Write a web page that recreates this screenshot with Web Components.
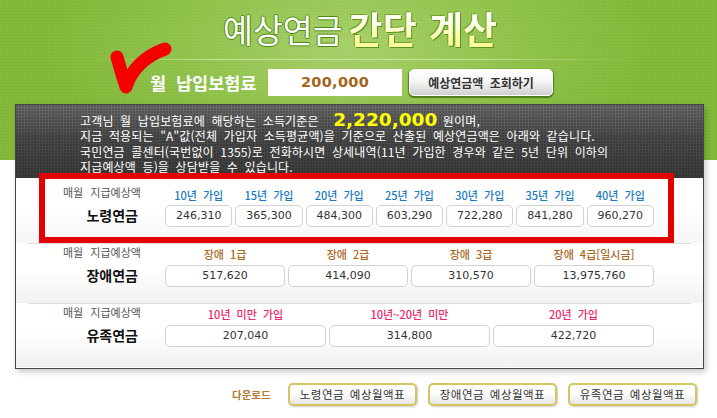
<!DOCTYPE html>
<html lang="ko">
<head>
<meta charset="utf-8">
<title>예상연금 간단 계산</title>
<style>
html, body { margin: 0; padding: 0; background: #fff; }
body { font-family: "Noto Sans CJK KR", "Liberation Sans", sans-serif; width: 717px; height: 418px; overflow: hidden; }
</style>
</head>
<body>
<pension-calculator>
  <pension-title slot="title"></pension-title>
  <premium-form slot="form" amount="200,000"></premium-form>
  <income-notice slot="notice" income="2,220,000"></income-notice>

  <pension-row slot="rows" name="노령연금" kind="old" highlight>
    <pension-cell label="10년 가입" value="246,310"></pension-cell>
    <pension-cell label="15년 가입" value="365,300"></pension-cell>
    <pension-cell label="20년 가입" value="484,300"></pension-cell>
    <pension-cell label="25년 가입" value="603,290"></pension-cell>
    <pension-cell label="30년 가입" value="722,280"></pension-cell>
    <pension-cell label="35년 가입" value="841,280"></pension-cell>
    <pension-cell label="40년 가입" value="960,270"></pension-cell>
  </pension-row>
  <pension-row slot="rows" name="장애연금" kind="disabled">
    <pension-cell label="장애 1급" value="517,620"></pension-cell>
    <pension-cell label="장애 2급" value="414,090"></pension-cell>
    <pension-cell label="장애 3급" value="310,570"></pension-cell>
    <pension-cell label="장애 4급[일시금]" value="13,975,760"></pension-cell>
  </pension-row>
  <pension-row slot="rows" name="유족연금" kind="survivor">
    <pension-cell label="10년 미만 가입" value="207,040"></pension-cell>
    <pension-cell label="10년~20년 미만" value="314,800"></pension-cell>
    <pension-cell label="20년 가입" value="422,720"></pension-cell>
  </pension-row>

  <download-bar slot="downloads">
    <download-button>노령연금 예상월액표</download-button>
    <download-button>장애연금 예상월액표</download-button>
    <download-button>유족연금 예상월액표</download-button>
  </download-bar>
</pension-calculator>

<script>
const FONT = `"Noto Sans CJK KR", "Liberation Sans", sans-serif`
const DOTS = `radial-gradient(circle at 1px 1px, rgba(255,255,255,0.05) 1px, transparent 1.2px)`

class PensionCalculator extends HTMLElement {
    constructor() {
        super()
        this.attachShadow({ mode: "open" })
        this.shadowRoot.innerHTML = `
        <style>
        :host { display: block; position: relative; width: 717px; height: 418px; background: #fff; }
        .top {
            height: 160px;
            background-image: ${DOTS}, radial-gradient(ellipse 300px 130px at 350px 45px, #a6cf68 0%, #8fc149 55%, #7fb735 100%);
            background-size: 3px 3px, auto;
        }
        .panel {
            margin: -56px 0 0 15px;
            position: relative;
            width: 687px;
            height: 263px;
            border: 1px solid #444;
            background: #fff;
            box-shadow: 2px 3px 6px rgba(0,0,0,0.22);
        }
        .check { position: absolute; left: 100px; top: 35px; width: 80px; height: 65px; filter: blur(0.4px); }
        .mark {
            position: absolute; left: 23px; top: 68px;
            width: 623px; height: 58px;
            border: 6px solid #e20000;
            pointer-events: none;
        }
        .foot { margin-top: 14px; }
        </style>
        <div class="top">
            <slot name="title"></slot>
            <slot name="form"></slot>
        </div>
        <div class="panel">
            <slot name="notice"></slot>
            <slot name="rows"></slot>
            <div class="mark"></div>
        </div>
        <div class="foot"><slot name="downloads"></slot></div>
        <svg class="check" viewBox="100 35 80 65">
            <path d="M117 57 C120 68 123 78 126 87 C131 70 145 56 165 49" fill="none" stroke="#f40000" stroke-width="13" stroke-linecap="round" stroke-linejoin="round"/>
        </svg>`
    }
}

class PensionTitle extends HTMLElement {
    constructor() {
        super()
        this.attachShadow({ mode: "open" })
        this.shadowRoot.innerHTML = `
        <style>
        :host {
            display: block; height: 60px; box-sizing: border-box;
            padding-left: 223px;
            font-family: ${FONT};
            border-bottom: 1px solid;
            border-image: linear-gradient(90deg, transparent 13%, #c6e09a 30%, #c6e09a 65%, transparent 88%) 1;
        }
        .row { display: flex; align-items: center; gap: 6px; height: 59px; }
        .soft {
            font-size: 32.5px; font-weight: 400; color: #fff; line-height: 1; margin-top: -1px;
            text-shadow: 1px 0 0 #4d8a12, -1px 0 0 #4d8a12, 0 1px 0 #4d8a12, 0 -1px 0 #4d8a12;
        }
        .bold {
            font-size: 37px; font-weight: 700; line-height: 1; word-spacing: 2px; margin-top: -3px;
            background: linear-gradient(180deg, #fffff4 30%, #fff9a0 80%);
            -webkit-background-clip: text; background-clip: text; color: transparent;
            filter: drop-shadow(1px 1px 0 #5b9419) drop-shadow(-1px -1px 0 #6fa62a);
        }
        </style>
        <div class="row"><span class="soft">예상연금</span><span class="bold">간단 계산</span></div>`
    }
}

class PremiumForm extends HTMLElement {
    constructor() {
        super()
        this.attachShadow({ mode: "open" })
        this.shadowRoot.innerHTML = `
        <style>
        :host { display: flex; align-items: center; height: 27px; margin-top: 9px; padding-left: 150px; font-family: ${FONT}; }
        .label { width: 118px; color: #fff; font-size: 17.5px; font-weight: 700; word-spacing: 5px; line-height: 27px; white-space: nowrap; }
        .amount {
            width: 134px; height: 27px; margin-right: 7px; background: #fff;
            color: #a5641b; font: 700 14.5px/27px "DejaVu Sans", sans-serif; text-align: center; letter-spacing: 0.3px;
        }
        .go {
            width: 144px; height: 27px; box-sizing: border-box;
            border: 1px solid #fff; border-radius: 5px;
            background: linear-gradient(180deg, #fff 0%, #f6f6f6 45%, #cfcfcf 100%);
            box-shadow: 0 1px 1px 1px #4f7d1b;
            color: #333; font: 700 12px/25px ${FONT}; text-align: center; word-spacing: 3px;
        }
        </style>
        <div class="label">월 납입보험료</div>
        <div class="amount"></div>
        <div class="go">예상연금액 조회하기</div>`
        this.shadowRoot.querySelector(".amount").textContent = this.getAttribute("amount")
    }
}

class IncomeNotice extends HTMLElement {
    constructor() {
        super()
        this.attachShadow({ mode: "open" })
        this.shadowRoot.innerHTML = `
        <style>
        :host {
            display: block; height: 73px; box-sizing: border-box; padding: 8px 0 0 64px;
            background-image: radial-gradient(circle at 1px 1px, rgba(0,0,0,0.18) 1px, transparent 1.2px), linear-gradient(180deg, #6a6a6a 0%, #4a4a4a 45%, #3c3c3c 100%);
            background-size: 3px 3px, auto;
            color: #fff; font: 400 12px/15px ${FONT}; white-space: nowrap; word-spacing: 3px; letter-spacing: 0.15px;
        }
        div { height: 15.3px; }
        b { color: #ffff00; font: 700 18.5px/0 "DejaVu Sans", sans-serif; margin: 0 -1px 0 8px; letter-spacing: 0; word-spacing: 0; }
        </style>
        <div>고객님 월 납입보험료에 해당하는 소득기준은 <b></b> 원이며,</div>
        <div>지금 적용되는 "A"값(전체 가입자 소득평균액)을 기준으로 산출된 예상연금액은 아래와 같습니다.</div>
        <div>국민연금 콜센터(국번없이 1355)로 전화하시면 상세내역(11년 가입한 경우와 같은 5년 단위 이하의</div>
        <div>지급예상액 등)을 상담받을 수 있습니다.</div>`
        this.shadowRoot.querySelector("b").textContent = this.getAttribute("income")
    }
}

const ROW_COLORS = { old: "#1a7abf", disabled: "#a8681f", survivor: "#f0286e" }

class PensionRow extends HTMLElement {
    constructor() {
        super()
        this.attachShadow({ mode: "open" })
        this.shadowRoot.innerHTML = `
        <style>
        :host {
            display: grid; grid-template-columns: 75px 1fr; column-gap: 27px;
            box-sizing: border-box;
            padding: 1px 49px 0 47px; height: 60px;
            background:
                linear-gradient(#dcdcdc, #dcdcdc) top center / 663px 1px no-repeat,
                linear-gradient(180deg, #fff 45%, #f1f1f1 100%);
            font-family: ${FONT};
            --label-top: 0px;
            --label-bottom: 1px;
        }
        :host([highlight]) { height: 65px; padding-top: 6px; background: linear-gradient(180deg, #fff 45%, #f6f6f6 100%); --label-top: 1px; --label-bottom: 0px; }
        :host([kind="survivor"]) { height: 64px; }
        .side { white-space: nowrap; text-align: right; }
        .hint { color: #555; font-size: 11px; line-height: 16px; text-align: left; word-spacing: 4px; }
        .name { color: #111; font-size: 14px; font-weight: 700; line-height: 22px; margin-top: 4px; }
        .cells { display: flex; gap: 3px; }
        </style>
        <div class="side"><div class="hint">매월 지급예상액</div><div class="name"></div></div>
        <div class="cells"><slot></slot></div>`
        this.shadowRoot.querySelector(".name").textContent = this.getAttribute("name")
        this.style.setProperty("--cell-label", ROW_COLORS[this.getAttribute("kind")])
    }
}

class PensionCell extends HTMLElement {
    constructor() {
        super()
        this.attachShadow({ mode: "open" })
        this.shadowRoot.innerHTML = `
        <style>
        :host { display: block; flex: 1 1 0; min-width: 0; font-family: ${FONT}; text-align: center; }
        .label {
            color: var(--cell-label); font-size: 11px; font-weight: 500; line-height: 20px; white-space: nowrap; word-spacing: 3px;
            margin-top: var(--label-top); margin-bottom: var(--label-bottom);
        }
        .value {
            height: 22px; box-sizing: border-box;
            border: 1px solid #d2d2d2; border-radius: 5px; background: #fff;
            color: #333; font: 400 11px/20px "DejaVu Sans", sans-serif;
        }
        </style>
        <div class="label"></div>
        <div class="value"></div>`
        this.shadowRoot.querySelector(".label").textContent = this.getAttribute("label")
        this.shadowRoot.querySelector(".value").textContent = this.getAttribute("value")
    }
}

class DownloadBar extends HTMLElement {
    constructor() {
        super()
        this.attachShadow({ mode: "open" })
        this.shadowRoot.innerHTML = `
        <style>
        :host { display: flex; align-items: center; height: 23px; padding-left: 232px; font-family: ${FONT}; }
        .label { width: 56px; color: #b07a30; font-size: 10.5px; font-weight: 700; white-space: nowrap; }
        .list { display: flex; gap: 11px; }
        </style>
        <div class="label">다운로드</div>
        <div class="list"><slot></slot></div>`
    }
}

class DownloadButton extends HTMLElement {
    constructor() {
        super()
        this.attachShadow({ mode: "open" })
        this.shadowRoot.innerHTML = `
        <style>
        :host {
            display: block; width: 129px; height: 23px; box-sizing: border-box;
            border: 2px solid #d2c65c; border-radius: 5px;
            background: linear-gradient(180deg, #fff 40%, #e6e6e6 100%);
            box-shadow: 1px 1px 2px rgba(0,0,0,0.2);
            color: #333; font: 400 11.5px/18px ${FONT}; text-align: center; white-space: nowrap; letter-spacing: 0.5px; word-spacing: 2px;
        }
        </style>
        <slot></slot>`
    }
}

customElements.define("pension-calculator", PensionCalculator)
customElements.define("pension-title", PensionTitle)
customElements.define("premium-form", PremiumForm)
customElements.define("income-notice", IncomeNotice)
customElements.define("pension-row", PensionRow)
customElements.define("pension-cell", PensionCell)
customElements.define("download-bar", DownloadBar)
customElements.define("download-button", DownloadButton)
</script>
</body>
</html>
